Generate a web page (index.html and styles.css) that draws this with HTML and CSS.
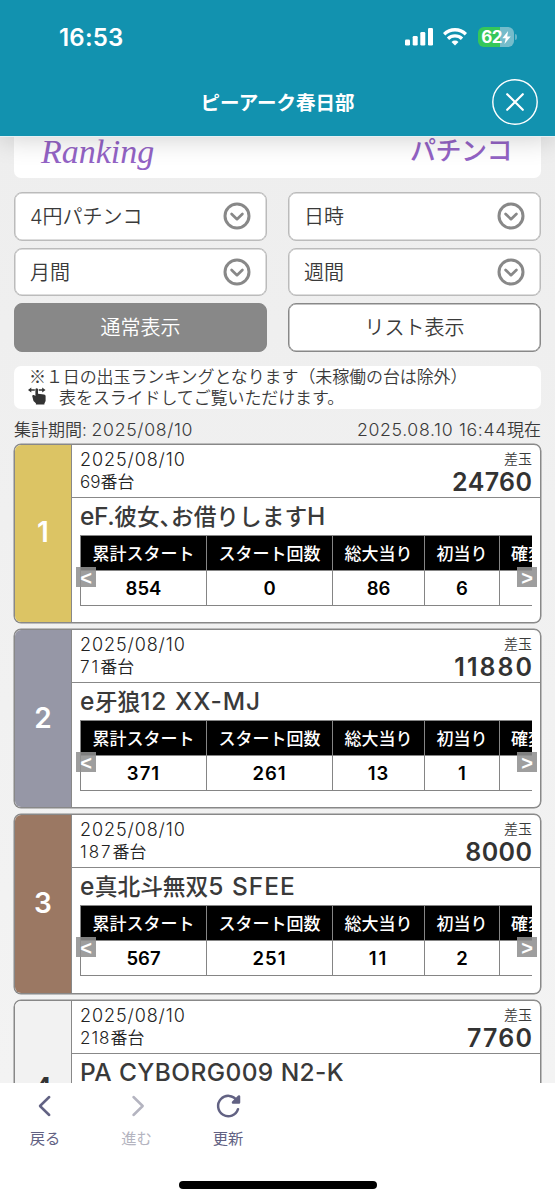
FILE: index.html
```
<!DOCTYPE html>
<html lang="ja">
<head>
<meta charset="utf-8">
<title>ピーアーク春日部</title>
<link rel="stylesheet" href="styles.css">
</head>
<body>
<svg class="defs" width="0" height="0">
  <symbol id="drop" viewBox="0 0 28 28"><circle cx="14" cy="14" r="12" fill="#fff" stroke="#888" stroke-width="3"/><path d="M8.6 12l5.4 5.2 5.4-5.2" fill="none" stroke="#888" stroke-width="2.7" stroke-linecap="round" stroke-linejoin="round"/></symbol>
</svg>
<header class="top">
  <div class="status">
    <span class="time">16:53</span>
    <div class="status-icons">
      <svg width="28" height="18" viewBox="0 0 28 18" fill="#fff"><rect x="0" y="11.4" width="5" height="6.2" rx="1.3"/><rect x="7.7" y="8" width="5" height="9.6" rx="1.3"/><rect x="15.3" y="4" width="5" height="13.6" rx="1.3"/><rect x="23" y="0" width="5" height="17.6" rx="1.3"/></svg>
      <svg class="wifi" width="24" height="18" viewBox="0 0 24 18" fill="none" stroke="#fff" stroke-width="3.3"><path d="M1.1 6.2a15.6 15.6 0 0 1 21.800 0"/><path d="M5 10.800a10 10 0 0 1 14 0"/><path d="M12 17.600l-3.500-3.600a5 5 0 0 1 7 0z" fill="#fff" stroke="none"/></svg>
      <div class="battery"><span>62</span><svg width="9" height="13" viewBox="0 0 9 13"><path d="M6.1 0L.3 7.2h3.400L2.5 13l6.200-7.500H5.200z" fill="#fff"/></svg></div><i class="tip"></i>
    </div>
  </div>
  <div class="titlebar">
    <h1>ピーアーク春日部</h1>
    <svg class="close" width="46" height="46" viewBox="0 0 46 46" fill="none" stroke="#fff"><circle cx="23" cy="23" r="22.200" stroke-width="1.4"/><path d="M15.200 15.200l15.600 15.600M30.800 15.200L15.200 30.800" stroke-width="2.200" stroke-linecap="round"/></svg>
  </div>
</header>
<main class="content">
  <section class="banner"><span class="ranking">Ranking</span><span class="kind">パチンコ</span></section>
  <section class="filters">
    <div class="select"><span>4円パチンコ</span><svg><use href="#drop"/></svg></div>
    <div class="select"><span>日時</span><svg><use href="#drop"/></svg></div>
    <div class="select"><span>月間</span><svg><use href="#drop"/></svg></div>
    <div class="select"><span>週間</span><svg><use href="#drop"/></svg></div>
    <div class="button active">通常表示</div>
    <div class="button">リスト表示</div>
  </section>
  <section class="note">
    <p>※１日の出玉ランキングとなります（未稼働の台は除外）</p>
    <p class="slide"><svg class="hand" width="18" height="18" viewBox="0 0 18 18" fill="#333"><path d="M0 3L3.300.4V2.300H6.800V3.700H3.300v1.900zM17.500 3L14.200.4V2.300H10.700V3.700h3.500v1.900z"/><path d="M7.400 2q1.300-1.500 2.600 0V6.800l6 .7q1.600.3 1.600 1.600v5l-1.200 2.300v1.100H7.900v-1.200l-2.400-2.300L4.200 9q.3-1.400 1.800-.9l1.400.8z"/></svg>表をスライドしてご覧いただけます。</p>
  </section>
  <div class="period"><span class="from">集計期間: <span class="num">2025/08/10</span></span><span class="now"><span class="num">2025.08.10 16:44</span>現在</span></div>
  <section class="list">
    <article class="card">
      <div class="rank gold">1</div>
      <div class="body">
        <div class="head"><div class="info"><p class="date">2025/08/10</p><p>69番台</p></div><div class="diff"><small>差玉</small><b>24760</b></div></div>
        <h2><span class="lat tight">eF.</span>彼女<span class="comma">、</span>お借りします<span class="lat tight">H</span></h2>
        <div class="slider"><table><tr><th>累計スタート</th><th>スタート回数</th><th>総大当り</th><th>初当り</th><th>確変</th></tr><tr><td>854</td><td>0</td><td>86</td><td>6</td><td></td></tr></table></div>
        <span class="arrow left">&lt;</span><span class="arrow right">&gt;</span>
      </div>
    </article>
    <article class="card">
      <div class="rank silver">2</div>
      <div class="body">
        <div class="head"><div class="info"><p class="date">2025/08/10</p><p><span class="wider">71</span>番台</p></div><div class="diff"><small>差玉</small><b class="ones">11880</b></div></div>
        <h2><span class="lat">e</span>牙狼<span class="lat wide">12 XX-MJ</span></h2>
        <div class="slider"><table><tr><th>累計スタート</th><th>スタート回数</th><th>総大当り</th><th>初当り</th><th>確変</th></tr><tr><td class="wide">371</td><td class="wide">261</td><td class="wide">13</td><td>1</td><td></td></tr></table></div>
        <span class="arrow left">&lt;</span><span class="arrow right">&gt;</span>
      </div>
    </article>
    <article class="card">
      <div class="rank bronze">3</div>
      <div class="body">
        <div class="head"><div class="info"><p class="date">2025/08/10</p><p><span class="wider">187</span>番台</p></div><div class="diff"><small>差玉</small><b>8000</b></div></div>
        <h2><span class="lat">e</span>真北斗無双<span class="lat wide">5 SFEE</span></h2>
        <div class="slider"><table><tr><th>累計スタート</th><th>スタート回数</th><th>総大当り</th><th>初当り</th><th>確変</th></tr><tr><td>567</td><td class="wide">251</td><td class="wider">11</td><td>2</td><td></td></tr></table></div>
        <span class="arrow left">&lt;</span><span class="arrow right">&gt;</span>
      </div>
    </article>
    <article class="card">
      <div class="rank plain">4</div>
      <div class="body">
        <div class="head"><div class="info"><p class="date">2025/08/10</p><p><span class="wide">218</span>番台</p></div><div class="diff"><small>差玉</small><b class="wide">7760</b></div></div>
        <h2><span class="lat">PA CYBORG009 N2-K</span></h2>
      </div>
    </article>
  </section>
</main>
<nav class="bottom">
  <div class="tabs">
    <div class="tab"><svg width="26" height="26" viewBox="0 0 26 26"><path d="M17.200 4L8 13l9.200 9"/></svg>戻る</div>
    <div class="tab off"><svg width="26" height="26" viewBox="0 0 26 26"><path d="M9.500 4l9.200 9-9.200 9"/></svg>進む</div>
    <div class="tab"><svg width="26" height="26" viewBox="0 0 26 26"><path d="M23 16.200A10.200 10.200 0 1 1 21.800 7.400"/><path d="M24 3.500v6h-6z" fill="#626283"/></svg>更新</div>
  </div>
  <div class="home"></div>
</nav>
</body>
</html>
```
FILE: styles.css
```
* { box-sizing: border-box; }
body {
  margin: 0;
  width: 555px;
  height: 1200px;
  overflow: hidden;
  display: flex;
  flex-direction: column;
  background: #fff;
  color: #3a3a3a;
  font-family: Inter, "Noto Sans CJK JP", sans-serif;
  font-weight: 350;
}
p, h1, h2 { margin: 0; }
.defs { position: absolute; }

.top {
  position: relative;
  z-index: 2;
  flex: none;
  height: 136px;
  background: #1292af;
  box-shadow: 0 1px 0 #e4f1f4, 0 2px 26px rgba(0, 0, 0, .2);
  color: #fff;
}
.status { height: 74px; padding: 0 38px 0 59px; display: flex; justify-content: space-between; align-items: center; }
.time { font-size: 24px; font-weight: 600; letter-spacing: .2px; }
.status-icons { display: flex; align-items: center; }
.wifi { margin-left: 10px; }
.battery {
  width: 36px;
  height: 20px;
  margin-left: 11px;
  border-radius: 6px;
  display: flex;
  align-items: center;
  justify-content: center;
  background: linear-gradient(90deg, #35c759 62%, #75bccb 62%);
  font-size: 17px;
  font-weight: 700;
  letter-spacing: -.6px;
}
.tip { width: 2px; height: 6px; margin-left: 1px; border-radius: 0 2px 2px 0; background: #63b5c8; }
.titlebar { height: 56px; padding-right: 17px; display: grid; grid-template-columns: 1fr 46px; align-items: center; }
.titlebar h1 { padding: 2px 0 0 63px; text-align: center; font-size: 19.500px; font-weight: 700; line-height: 28px; }

.content {
  flex: none;
  height: 947px;
  overflow: hidden;
  padding: 0 14px;
  background: linear-gradient(#eee, #f3f3f3);
}
.banner {
  height: 42px;
  padding: 0 29px 0 27px;
  display: flex;
  justify-content: space-between;
  background: #fff;
  border-radius: 0 0 7px 7px;
  color: #9363c5;
}
.ranking { font: italic 34px/32px "Liberation Serif", serif; }
.kind { font-size: 26px; font-weight: 500; line-height: 29px; letter-spacing: -.5px; }

.filters { margin-top: 14px; display: grid; grid-template-columns: 253px 253px; justify-content: space-between; grid-auto-rows: 48.500px; row-gap: 7px; }
.select, .button { border: 1px solid #bbb; box-shadow: inset 0 0 0 .5px #bbb; border-radius: 8px; background: #fff; font-size: 20px; line-height: 48px; }
.select { padding: 0 15px; display: flex; justify-content: space-between; align-items: center; }
.select span { padding-top: 2px; }
.select svg { width: 28px; height: 28px; }
.button { border-color: #888; box-shadow: inset 0 0 0 .5px #888; text-align: center; }
.button.active { background: #888; color: #fff; }

.note { height: 43px; margin-top: 14px; padding: 0 14px 0 15px; background: #fff; border-radius: 7px; font-family: "Noto Sans CJK JP", sans-serif; font-size: 17px; line-height: 19px; letter-spacing: -.1px; }
.note p { display: flex; align-items: center; height: 21px; padding-bottom: 2px; }
.hand { margin: 0 13px 1px -1px; }
.period { height: 35px; padding-top: 9px; display: flex; justify-content: space-between; font-size: 17px; line-height: 24px; }
.num { font-size: 17.700px; letter-spacing: .65px; }

.list { display: grid; grid-auto-rows: 179.400px; row-gap: 6px; }
.card { display: grid; grid-template-columns: 57px 1fr; overflow: hidden; border: 1px solid #888; box-shadow: 0 0 0 .5px #888; border-radius: 7px; background: #fff; }
.rank { display: flex; align-items: center; justify-content: center; padding-bottom: 2px; border-right: 1px solid #888; color: #fff; font-size: 28px; font-weight: 600; }
.gold { background: #dcc464; }
.silver { background: #9697a6; }
.bronze { background: #9b7863; }
.plain { background: #f2f2f2; color: #333; }
.body { position: relative; min-width: 0; }
.head { height: 53px; padding: 3px 8px 0; display: flex; justify-content: space-between; border-bottom: 1px solid #888; }
.info { font-size: 17px; line-height: 23px; color: #222; }
.date { font-size: 18px; letter-spacing: .9px; }
.diff { display: flex; flex-direction: column; align-items: flex-end; }
.diff small { font-size: 14px; line-height: 22px; }
.diff b { font-size: 25px; line-height: 25px; font-weight: 600; letter-spacing: .4px; margin-right: -.4px; color: #333; }
.diff b.ones { letter-spacing: 2px; margin-right: -2px; }
.diff b.wide { letter-spacing: 1.200px; margin-right: -1.200px; }
.body h2 { height: 37px; padding-left: 8px; font-size: 22.700px; line-height: 36px; font-weight: 500; white-space: nowrap; }
.lat { font-size: 24.500px; font-weight: 550; letter-spacing: .4px; }
.wide { letter-spacing: 1px; }
.wider { letter-spacing: 2px; }
.tight { letter-spacing: -.4px; }
.comma { font-feature-settings: "halt"; }
.slider { width: 452px; margin-left: 8px; overflow: hidden; }
.slider table { width: 586px; table-layout: fixed; border-collapse: collapse; }
th, td { height: 35px; padding: 0; border: 1px solid #858585; text-align: center; color: #000; }
th { width: 126px; background: #000; color: #fff; font-size: 17px; font-weight: 500; }
th:nth-child(3) { width: 92px; }
th:nth-child(4) { width: 75px; }
th:nth-child(5) { width: 167px; padding-left: 11px; text-align: left; }
th { padding-bottom: 1px; }
td { font-size: 18.500px; font-weight: 600; }
.arrow {
  position: absolute;
  top: 122px;
  width: 20px;
  height: 20px;
  background: rgba(145, 145, 145, .88);
  color: #fff;
  text-align: center;
  font-family: "Liberation Sans", sans-serif;
  font-size: 20px;
  line-height: 22px;
  font-weight: 700;
}
.left { left: 4px; }
.right { right: 3px; }

.bottom { flex: none; height: 117px; padding-left: 15px; background: #fff; }
.tabs { display: flex; gap: 31.500px; height: 98px; }
.tab { width: 60px; padding-top: 10px; display: flex; flex-direction: column; align-items: center; color: #626283; font-size: 15.300px; line-height: 22px; font-weight: 400; }
.tab svg { margin-bottom: 9px; fill: none; stroke: currentColor; stroke-width: 2.500px; stroke-linecap: round; stroke-linejoin: round; }
.off { color: #b4b4c0; }
.home { width: 198px; height: 8px; margin-left: 164px; border-radius: 4px; background: #000; }
```
